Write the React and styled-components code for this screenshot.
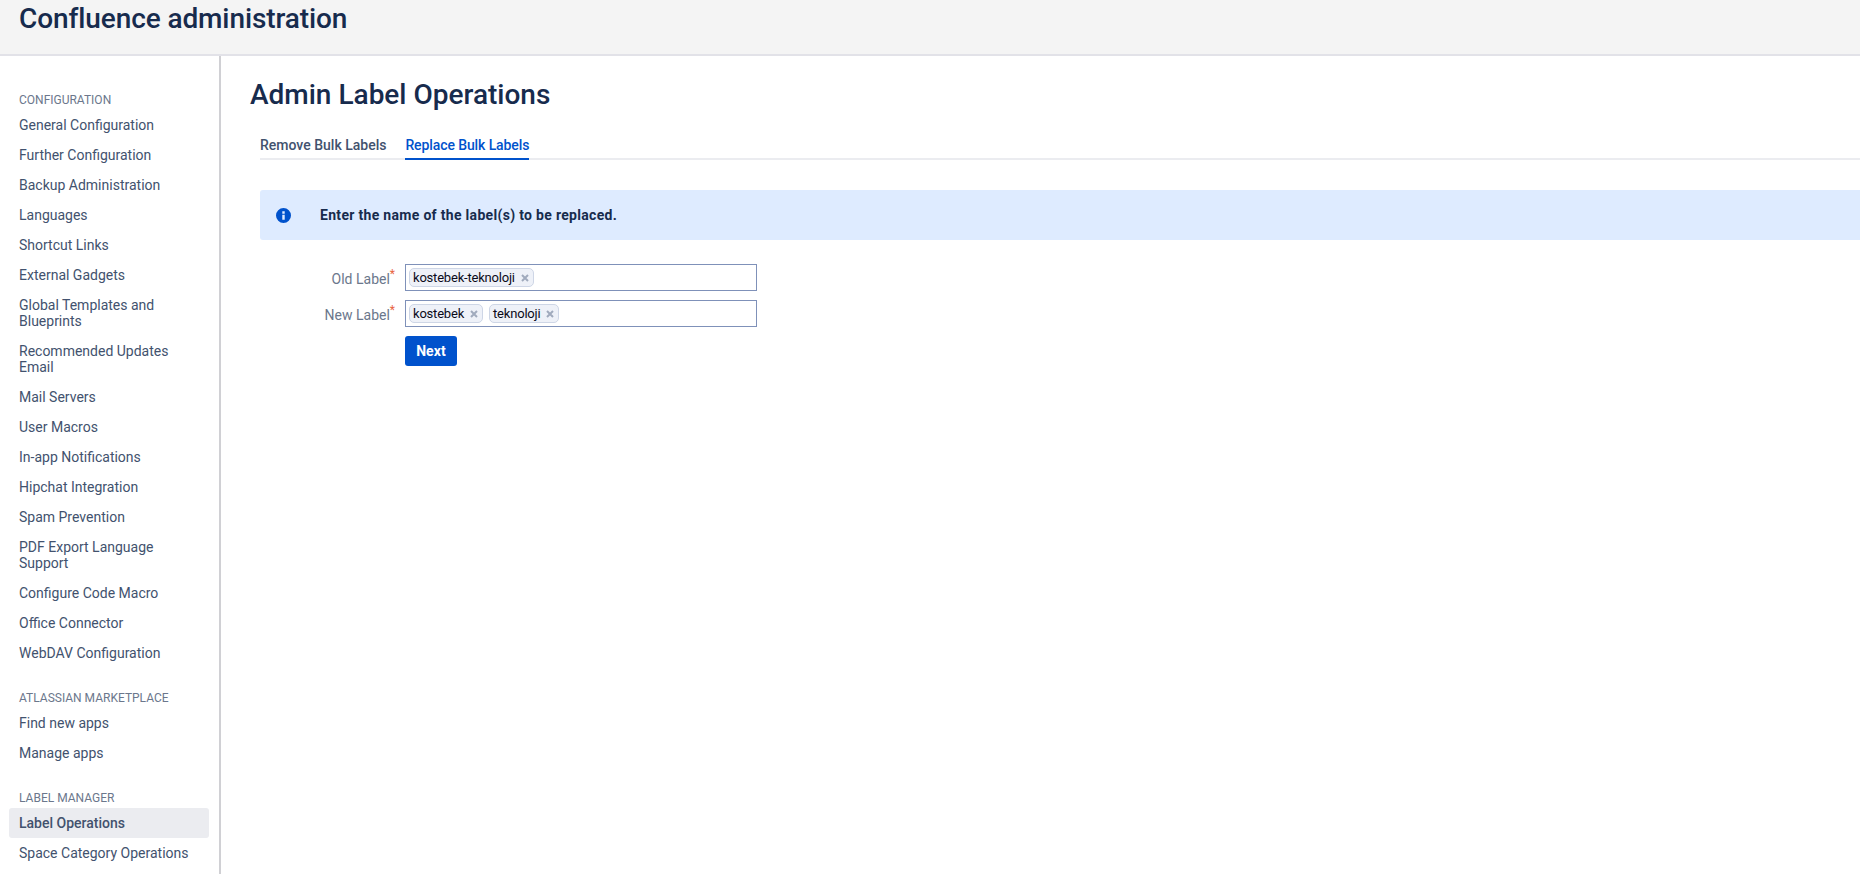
import React from "react";
import styled, { createGlobalStyle } from "styled-components";

const GlobalStyle = createGlobalStyle`
  html, body {
    margin: 0;
    padding: 0;
    background: #fff;
    font-family: "Roboto", "Liberation Sans", sans-serif;
    font-size: 14px;
    color: #172b4d;
  }
`;

const Page = styled.div`
  width: 100%;
  height: 874px;
  overflow: hidden;
  display: flex;
  flex-direction: column;
`;

const Header = styled.header`
  flex: none;
  height: 54px;
  padding-left: 19px;
  background: #f4f4f4;
  border-bottom: 2px solid #e2e2e8;
`;

const HeaderTitle = styled.h1`
  margin: 0;
  font-size: 28px;
  line-height: 38px;
  font-weight: 500;
  letter-spacing: -0.1px;
  color: #172b4d;
`;

const Body = styled.div`
  flex: 1;
  display: flex;
  min-height: 0;
`;

const Sidebar = styled.nav`
  flex: none;
  width: 219px;
  border-right: 2px solid #d0d0d4;
  padding-top: 34px;
`;

const NavGroup = styled.div`
  width: 200px;
  margin: 0 0 20px 9px;
`;

const NavHeading = styled.div`
  padding-left: 10px;
  font-size: 12px;
  line-height: 20px;
  color: #6b778c;
`;

const NavItem = styled.a`
  display: block;
  padding: 7px 10px;
  font-size: 14px;
  line-height: 16px;
  border-radius: 3px;
  color: #42526e;
  font-weight: ${(p) => (p.$active ? 500 : 400)};
  background: ${(p) => (p.$active ? "#ebecf0" : "transparent")};
`;

const Main = styled.main`
  flex: 1;
  min-width: 0;
  padding: 19px 0 0 29px;
`;

const PageTitle = styled.h2`
  margin: 0 0 15px;
  font-size: 28px;
  line-height: 40px;
  font-weight: 500;
  color: #172b4d;
`;

const Content = styled.div`
  padding-left: 10px;
`;

const Tabs = styled.div`
  display: flex;
  gap: 19px;
  height: 28px;
  border-bottom: 2px solid #ebecf0;
`;

const Tab = styled.a`
  height: 28px;
  line-height: 30px;
  font-size: 14px;
  font-weight: 500;
  letter-spacing: ${(p) => (p.$active ? "-0.1px" : "0")};
  color: ${(p) => (p.$active ? "#0052cc" : "#42526e")};
  border-bottom: 2px solid ${(p) => (p.$active ? "#0052cc" : "transparent")};
`;

const Banner = styled.div`
  display: flex;
  align-items: center;
  height: 50px;
  margin-top: 30px;
  padding-left: 16px;
  border-radius: 3px 0 0 3px;
  background: #deebff;
`;

const BannerIcon = styled.svg`
  width: 15px;
  height: 15px;
  flex: none;
  margin-right: 29px;
  fill: #0052cc;
`;

const BannerText = styled.strong`
  font-size: 14px;
  font-weight: 700;
  letter-spacing: 0.31px;
  color: #172b4d;
`;

const Form = styled.form`
  display: grid;
  grid-template-columns: 135px 352px;
  column-gap: 10px;
  row-gap: 9px;
  margin-top: 24px;
`;

const FieldLabel = styled.label`
  justify-self: end;
  padding-top: 5px;
  font-size: 14px;
  line-height: 20px;
  color: #6b778c;
`;

const Required = styled.sup`
  color: #e8633f;
  font-size: 12px;
  line-height: 0;
`;

const TagInput = styled.div`
  box-sizing: border-box;
  height: 27px;
  display: flex;
  align-items: center;
  gap: 6px;
  padding-left: 3px;
  border: 1px solid #7f91b9;
  background: #fff;
`;

const Tag = styled.span`
  box-sizing: border-box;
  height: 19px;
  display: inline-flex;
  align-items: center;
  gap: 6px;
  padding: 0 4px 0 3px;
  border: 1px solid #ced6e6;
  border-radius: 5px;
  background: #eef1f8;
  font-size: 13px;
  letter-spacing: -0.2px;
  color: #0b0b1a;
`;

const TagClose = styled.svg`
  width: 8px;
  height: 8px;
  stroke: #a0aabd;
  stroke-width: 2;
  fill: none;
`;

const NextButton = styled.button`
  grid-column: 2;
  justify-self: start;
  width: 52px;
  height: 30px;
  padding: 0;
  border: 0;
  border-radius: 3px;
  background: #0052cc;
  color: #fff;
  font-family: inherit;
  font-size: 14px;
  font-weight: 700;
  letter-spacing: 0.1px;
`;

const navGroups = [
  {
    title: "CONFIGURATION",
    items: [
      "General Configuration",
      "Further Configuration",
      "Backup Administration",
      "Languages",
      "Shortcut Links",
      "External Gadgets",
      "Global Templates and Blueprints",
      "Recommended Updates Email",
      "Mail Servers",
      "User Macros",
      "In-app Notifications",
      "Hipchat Integration",
      "Spam Prevention",
      "PDF Export Language Support",
      "Configure Code Macro",
      "Office Connector",
      "WebDAV Configuration",
    ],
  },
  { title: "ATLASSIAN MARKETPLACE", items: ["Find new apps", "Manage apps"] },
  { title: "LABEL MANAGER", items: ["Label Operations", "Space Category Operations"] },
];

function LabelTag({ children }) {
  return (
    <Tag>
      {children}
      <TagClose viewBox="0 0 8 8">
        <path d="M1 1L7 7M7 1L1 7" />
      </TagClose>
    </Tag>
  );
}

export default function App() {
  return (
    <Page>
      <GlobalStyle />
      <Header>
        <HeaderTitle>Confluence administration</HeaderTitle>
      </Header>
      <Body>
        <Sidebar>
          {navGroups.map((group) => (
            <NavGroup key={group.title}>
              <NavHeading>{group.title}</NavHeading>
              {group.items.map((item) => (
                <NavItem key={item} $active={item === "Label Operations"}>
                  {item}
                </NavItem>
              ))}
            </NavGroup>
          ))}
        </Sidebar>
        <Main>
          <PageTitle>Admin Label Operations</PageTitle>
          <Content>
            <Tabs>
              <Tab>Remove Bulk Labels</Tab>
              <Tab $active>Replace Bulk Labels</Tab>
            </Tabs>
            <Banner>
              <BannerIcon viewBox="0 0 16 16">
                <path
                  fillRule="evenodd"
                  d="M8 0a8 8 0 1 1 0 16A8 8 0 0 1 8 0zM6.7 3.4v2.7h2.6V3.4zM6.7 7.2v5.4h2.6V7.2z"
                />
              </BannerIcon>
              <BannerText>Enter the name of the label(s) to be replaced.</BannerText>
            </Banner>
            <Form>
              <FieldLabel>
                Old Label<Required>*</Required>
              </FieldLabel>
              <TagInput>
                <LabelTag>kostebek-teknoloji</LabelTag>
              </TagInput>
              <FieldLabel>
                New Label<Required>*</Required>
              </FieldLabel>
              <TagInput>
                <LabelTag>kostebek</LabelTag>
                <LabelTag>teknoloji</LabelTag>
              </TagInput>
              <NextButton type="button">Next</NextButton>
            </Form>
          </Content>
        </Main>
      </Body>
    </Page>
  );
}
